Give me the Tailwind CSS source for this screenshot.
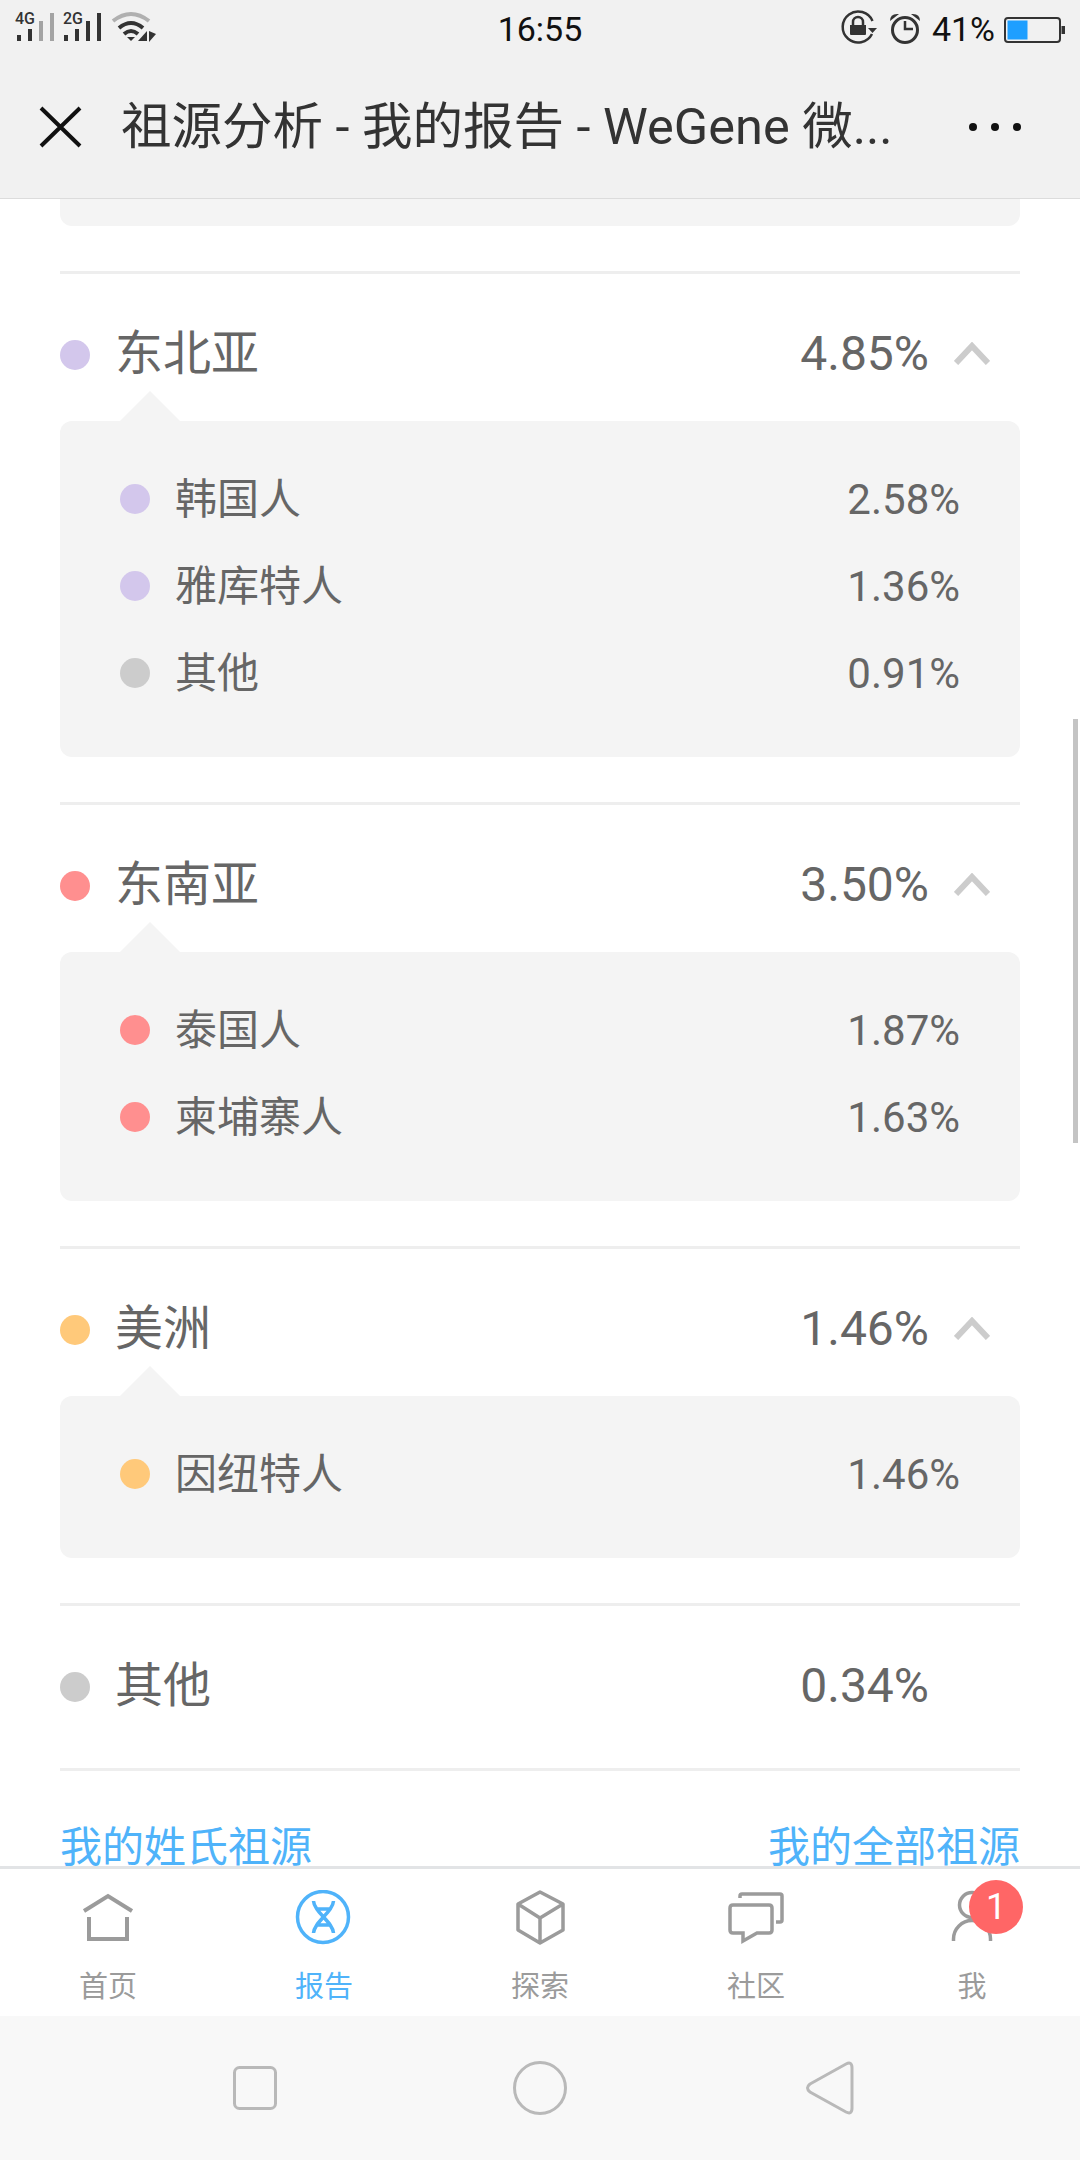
<!DOCTYPE html>
<html lang="zh-CN">
<head>
    <meta charset="UTF-8">
    <meta name="viewport" content="width=device-width, initial-scale=1.0">
    <title>祖源分析 - 我的报告</title>
    <script src="https://cdn.jsdelivr.net/npm/@tailwindcss/browser@4"></script>
</head>
<body class="bg-white">
<div class="relative w-[1080px] h-[2160px] flex flex-col overflow-hidden bg-white font-['Roboto','Noto_Sans_CJK_SC',sans-serif]">

    <!-- Status bar + title -->
    <header class="h-[199px] shrink-0 bg-[#f1f1f1] border-b border-[#dcdcdc]">
        <div class="h-[60px] grid grid-cols-3 items-center">
            <svg class="w-[160px] h-[60px]" viewBox="0 0 160 60">
                <text x="15" y="23.5" font-size="16" font-weight="500" fill="#333" font-family="Roboto">4G</text>
                <rect x="17" y="35" width="4" height="6" fill="#333"/>
                <rect x="28" y="29" width="4" height="12" fill="#333"/>
                <rect x="39" y="21" width="4" height="20" fill="#a3a3a3"/>
                <rect x="50" y="13" width="4" height="28" fill="#a3a3a3"/>
                <text x="63" y="23.5" font-size="16" font-weight="500" fill="#333" font-family="Roboto">2G</text>
                <rect x="64" y="35" width="4" height="6" fill="#333"/>
                <rect x="75" y="29" width="4" height="12" fill="#333"/>
                <rect x="86" y="21" width="4" height="20" fill="#333"/>
                <rect x="97" y="13" width="4" height="28" fill="#333"/>
                <path d="M113 21 Q131 7 149 21" fill="none" stroke="#b0b0b0" stroke-width="4"/>
                <path d="M119 28 Q131 18 143 28" fill="none" stroke="#333" stroke-width="4"/>
                <path d="M124 34 Q131 28 138 34" fill="none" stroke="#333" stroke-width="4"/>
                <path d="M127 37 L135 37 L131 41 Z" fill="#333"/>
                <path d="M138 41 L147 41 L147 31 Z" fill="#333"/>
                <path d="M149 31 L156 34 L149 42 Z" fill="#333"/>
            </svg>
            <div class="text-center text-[34px] leading-[58px] pb-[2px] text-[#111]">16:55</div>
            <div class="flex items-center justify-end pr-[15px]">
                <svg class="w-[80px] h-[60px] mr-[12px]" viewBox="840 0 80 60">
                    <path d="M872 34 A15.5 15.5 0 1 1 872.5 21" fill="none" stroke="#333" stroke-width="2.5"/>
                    <path d="M868 28 L877 28 L872.5 33 Z" fill="#333"/>
                    <path d="M850 25 H866 V34 Q866 35 865 35 H851 Q850 35 850 34 Z" fill="#333"/>
                    <path d="M853 25 V22 A5 5 0 0 1 863 22 V25" fill="none" stroke="#333" stroke-width="2.5"/>
                    <circle cx="905" cy="30" r="12.5" fill="none" stroke="#333" stroke-width="3"/>
                    <path d="M905 21 V29 H913" fill="none" stroke="#333" stroke-width="2.5"/>
                    <path d="M890 21 Q890 13 899 14 Z" fill="#333"/>
                    <path d="M920 21 Q920 13 911 14 Z" fill="#333"/>
                </svg>
                <span class="text-[34px] leading-[58px] pb-[2px] text-[#111] mr-[9px]">41%</span>
                <svg class="w-[61px] h-[26px]" viewBox="0 0 61 26">
                    <rect x="1" y="1" width="55" height="24" rx="3" fill="none" stroke="#333" stroke-width="2"/>
                    <rect x="3.5" y="3.5" width="20" height="19" fill="#1e9fff"/>
                    <rect x="57.5" y="9" width="3.5" height="8" fill="#333"/>
                </svg>
            </div>
        </div>
        <div class="h-[138px] flex items-center pb-[4px] relative">
            <svg class="w-[43px] h-[42px] ml-[39px] shrink-0" viewBox="0 0 43 42">
                <path d="M2 2 L41 40 M41 2 L2 40" fill="none" stroke="#111" stroke-width="4"/>
            </svg>
            <h1 class="ml-[39px] text-[50.5px] leading-[60px] text-[#333] whitespace-nowrap font-normal">祖源分析 - 我的报告 - WeGene 微...</h1>
            <div class="ml-auto mr-[59px] flex gap-[14px]">
                <span class="w-[8px] h-[8px] rounded-full bg-[#111]"></span>
                <span class="w-[8px] h-[8px] rounded-full bg-[#111]"></span>
                <span class="w-[8px] h-[8px] rounded-full bg-[#111]"></span>
            </div>
        </div>
    </header>

    <!-- Scrolled report list -->
    <main class="h-[1667px] shrink-0 overflow-hidden px-[60px]">
        <div class="w-[960px] h-[27px] bg-[#f4f4f4] rounded-b-[12px]"></div>

        <!-- 东北亚 -->
        <section class="mt-[45px] border-t-[3px] border-[#eeeeee] pb-[45px]">
            <div class="relative flex items-center h-[62px] mt-[50px] mb-[35px] text-[48px] text-[#666]">
                <span class="w-[30px] h-[30px] rounded-full bg-[#d3c7ec]"></span>
                <span class="ml-[25px] mb-[3px] leading-[62px]">东北亚</span>
                <span class="ml-auto mb-[3px] leading-[62px]">4.85%</span>
                <span class="w-[91px] pl-[25px] mb-[3px]">
                    <svg class="w-[36px] h-[23px]" viewBox="0 0 36 23"><path d="M2 21 L18 4 L34 21" fill="none" stroke="#cccccc" stroke-width="6"/></svg>
                </span>
                <span class="absolute left-[60px] top-[67px] w-0 h-0 border-x-[30px] border-x-transparent border-b-[30px] border-b-[#f4f4f4]"></span>
            </div>
            <div class="bg-[#f4f4f4] rounded-[12px] pt-[34px] pb-[41px] pl-[60px] pr-[60px] text-[42px] text-[#666]">
                <div class="h-[87px] flex items-center"><span class="w-[30px] h-[30px] rounded-full bg-[#d3c7ec]"></span><span class="ml-[25px] mt-[2px]">韩国人</span><span class="ml-auto mt-[2px]">2.58%</span></div>
                <div class="h-[87px] flex items-center"><span class="w-[30px] h-[30px] rounded-full bg-[#d3c7ec]"></span><span class="ml-[25px] mt-[2px]">雅库特人</span><span class="ml-auto mt-[2px]">1.36%</span></div>
                <div class="h-[87px] flex items-center"><span class="w-[30px] h-[30px] rounded-full bg-[#cccccc]"></span><span class="ml-[25px] mt-[2px]">其他</span><span class="ml-auto mt-[2px]">0.91%</span></div>
            </div>
        </section>

        <!-- 东南亚 -->
        <section class="border-t-[3px] border-[#eeeeee] pb-[45px]">
            <div class="relative flex items-center h-[62px] mt-[50px] mb-[35px] text-[48px] text-[#666]">
                <span class="w-[30px] h-[30px] rounded-full bg-[#ff8f8f]"></span>
                <span class="ml-[25px] mb-[3px] leading-[62px]">东南亚</span>
                <span class="ml-auto mb-[3px] leading-[62px]">3.50%</span>
                <span class="w-[91px] pl-[25px] mb-[3px]">
                    <svg class="w-[36px] h-[23px]" viewBox="0 0 36 23"><path d="M2 21 L18 4 L34 21" fill="none" stroke="#cccccc" stroke-width="6"/></svg>
                </span>
                <span class="absolute left-[60px] top-[67px] w-0 h-0 border-x-[30px] border-x-transparent border-b-[30px] border-b-[#f4f4f4]"></span>
            </div>
            <div class="bg-[#f4f4f4] rounded-[12px] pt-[34px] pb-[41px] pl-[60px] pr-[60px] text-[42px] text-[#666]">
                <div class="h-[87px] flex items-center"><span class="w-[30px] h-[30px] rounded-full bg-[#ff8f8f]"></span><span class="ml-[25px] mt-[2px]">泰国人</span><span class="ml-auto mt-[2px]">1.87%</span></div>
                <div class="h-[87px] flex items-center"><span class="w-[30px] h-[30px] rounded-full bg-[#ff8f8f]"></span><span class="ml-[25px] mt-[2px]">柬埔寨人</span><span class="ml-auto mt-[2px]">1.63%</span></div>
            </div>
        </section>

        <!-- 美洲 -->
        <section class="border-t-[3px] border-[#eeeeee] pb-[45px]">
            <div class="relative flex items-center h-[62px] mt-[50px] mb-[35px] text-[48px] text-[#666]">
                <span class="w-[30px] h-[30px] rounded-full bg-[#ffc97a]"></span>
                <span class="ml-[25px] mb-[3px] leading-[62px]">美洲</span>
                <span class="ml-auto mb-[3px] leading-[62px]">1.46%</span>
                <span class="w-[91px] pl-[25px] mb-[3px]">
                    <svg class="w-[36px] h-[23px]" viewBox="0 0 36 23"><path d="M2 21 L18 4 L34 21" fill="none" stroke="#cccccc" stroke-width="6"/></svg>
                </span>
                <span class="absolute left-[60px] top-[67px] w-0 h-0 border-x-[30px] border-x-transparent border-b-[30px] border-b-[#f4f4f4]"></span>
            </div>
            <div class="bg-[#f4f4f4] rounded-[12px] pt-[34px] pb-[41px] pl-[60px] pr-[60px] text-[42px] text-[#666]">
                <div class="h-[87px] flex items-center"><span class="w-[30px] h-[30px] rounded-full bg-[#ffc97a]"></span><span class="ml-[25px] mt-[2px]">因纽特人</span><span class="ml-auto mt-[2px]">1.46%</span></div>
            </div>
        </section>

        <!-- 其他 -->
        <section class="border-t-[3px] border-[#eeeeee]">
            <div class="flex items-center h-[62px] my-[50px] text-[48px] text-[#666]">
                <span class="w-[30px] h-[30px] rounded-full bg-[#cccccc]"></span>
                <span class="ml-[25px] mb-[3px] leading-[62px]">其他</span>
                <span class="ml-auto mb-[3px] leading-[62px]">0.34%</span>
                <span class="w-[91px]"></span>
            </div>
        </section>

        <div class="border-t-[3px] border-[#eeeeee] pt-[47px] flex justify-between text-[42px] leading-[60px] text-[#4fb3fa]">
            <a>我的姓氏祖源</a>
            <a>我的全部祖源</a>
        </div>
    </main>

    <!-- Tab bar -->
    <nav class="relative h-[150px] shrink-0 bg-white border-t-[3px] border-[#e2e4e6] grid grid-cols-5 text-[29px] leading-[36px] text-[#9b9b9b]">
        <div class="flex flex-col items-center">
            <svg class="w-[60px] h-[60px] mt-[21px]" viewBox="78 1890 60 60"><path d="M84 1911 L108 1896 L132 1911 M89 1917 V1939 H127 V1917" fill="none" stroke="#9b9b9b" stroke-width="4"/></svg>
            <span class="mt-[19px]">首页</span>
        </div>
        <div class="flex flex-col items-center text-[#4fb3fa]">
            <svg class="w-[60px] h-[60px] mt-[21px]" viewBox="294 1890 60 60">
                <circle cx="323" cy="1917" r="25.5" fill="none" stroke="#4fb3fa" stroke-width="3.5"/>
                <path d="M313.5 1901 C314 1912 333 1922 333.5 1933 M333.5 1901 C333 1912 314 1922 313.5 1933 M316 1909 H331 M316 1925 H331" fill="none" stroke="#4fb3fa" stroke-width="3.5"/>
            </svg>
            <span class="mt-[19px]">报告</span>
        </div>
        <div class="flex flex-col items-center">
            <svg class="w-[60px] h-[60px] mt-[21px]" viewBox="510 1890 60 60">
                <path d="M540 1892 L563 1904 V1930 L540 1943 L518 1930 V1904 Z M518 1904 L540 1918 L563 1904 M540 1918 V1943" fill="none" stroke="#9b9b9b" stroke-width="3.5" stroke-linejoin="round"/>
            </svg>
            <span class="mt-[19px]">探索</span>
        </div>
        <div class="flex flex-col items-center">
            <svg class="w-[60px] h-[60px] mt-[21px]" viewBox="726 1890 60 60">
                <path d="M740 1898 V1896 Q740 1894 742 1894 H780 Q782 1894 782 1896 V1920 Q782 1922 780 1922 H776" fill="none" stroke="#9b9b9b" stroke-width="3.5"/>
                <path d="M733 1905 H769 Q772 1905 772 1908 V1930 Q772 1933 769 1933 H757 L743 1941 V1933 H733 Q730 1933 730 1930 V1908 Q730 1905 733 1905 Z" fill="none" stroke="#9b9b9b" stroke-width="3.5"/>
            </svg>
            <span class="mt-[19px]">社区</span>
        </div>
        <div class="flex flex-col items-center">
            <svg class="w-[60px] h-[60px] mt-[21px]" viewBox="942 1890 60 60">
                <circle cx="972" cy="1905" r="12.5" fill="none" stroke="#9b9b9b" stroke-width="3.5"/>
                <path d="M953.5 1941 V1939 A18.5 18.5 0 0 1 990.5 1939 V1941" fill="none" stroke="#9b9b9b" stroke-width="3.5"/>
            </svg>
            <span class="mt-[19px]">我</span>
        </div>
        <span class="absolute left-[969px] top-[11px] w-[54px] h-[54px] rounded-full bg-[#ff6666] text-white text-[36px] leading-[54px] text-center">1</span>
    </nav>

    <!-- Android nav -->
    <div class="flex-1 bg-[#f8f8f8]">
        <svg class="w-[1080px] h-[144px]" viewBox="0 2016 1080 144">
            <rect x="234.5" y="2067.5" width="41" height="41" rx="5" fill="none" stroke="#b9b9b9" stroke-width="3"/>
            <circle cx="540" cy="2088" r="25.5" fill="none" stroke="#b9b9b9" stroke-width="3"/>
            <path d="M810 2084 L846 2064 Q852 2061 852 2068 V2108 Q852 2115 846 2112 L810 2092 Q805 2088 810 2084 Z" fill="none" stroke="#b9b9b9" stroke-width="3"/>
        </svg>
    </div>

    <!-- Scroll indicator -->
    <span class="absolute left-[1073px] top-[719px] w-[5px] h-[424px] bg-[#c4c4c4]"></span>
</div>
</body>
</html>
